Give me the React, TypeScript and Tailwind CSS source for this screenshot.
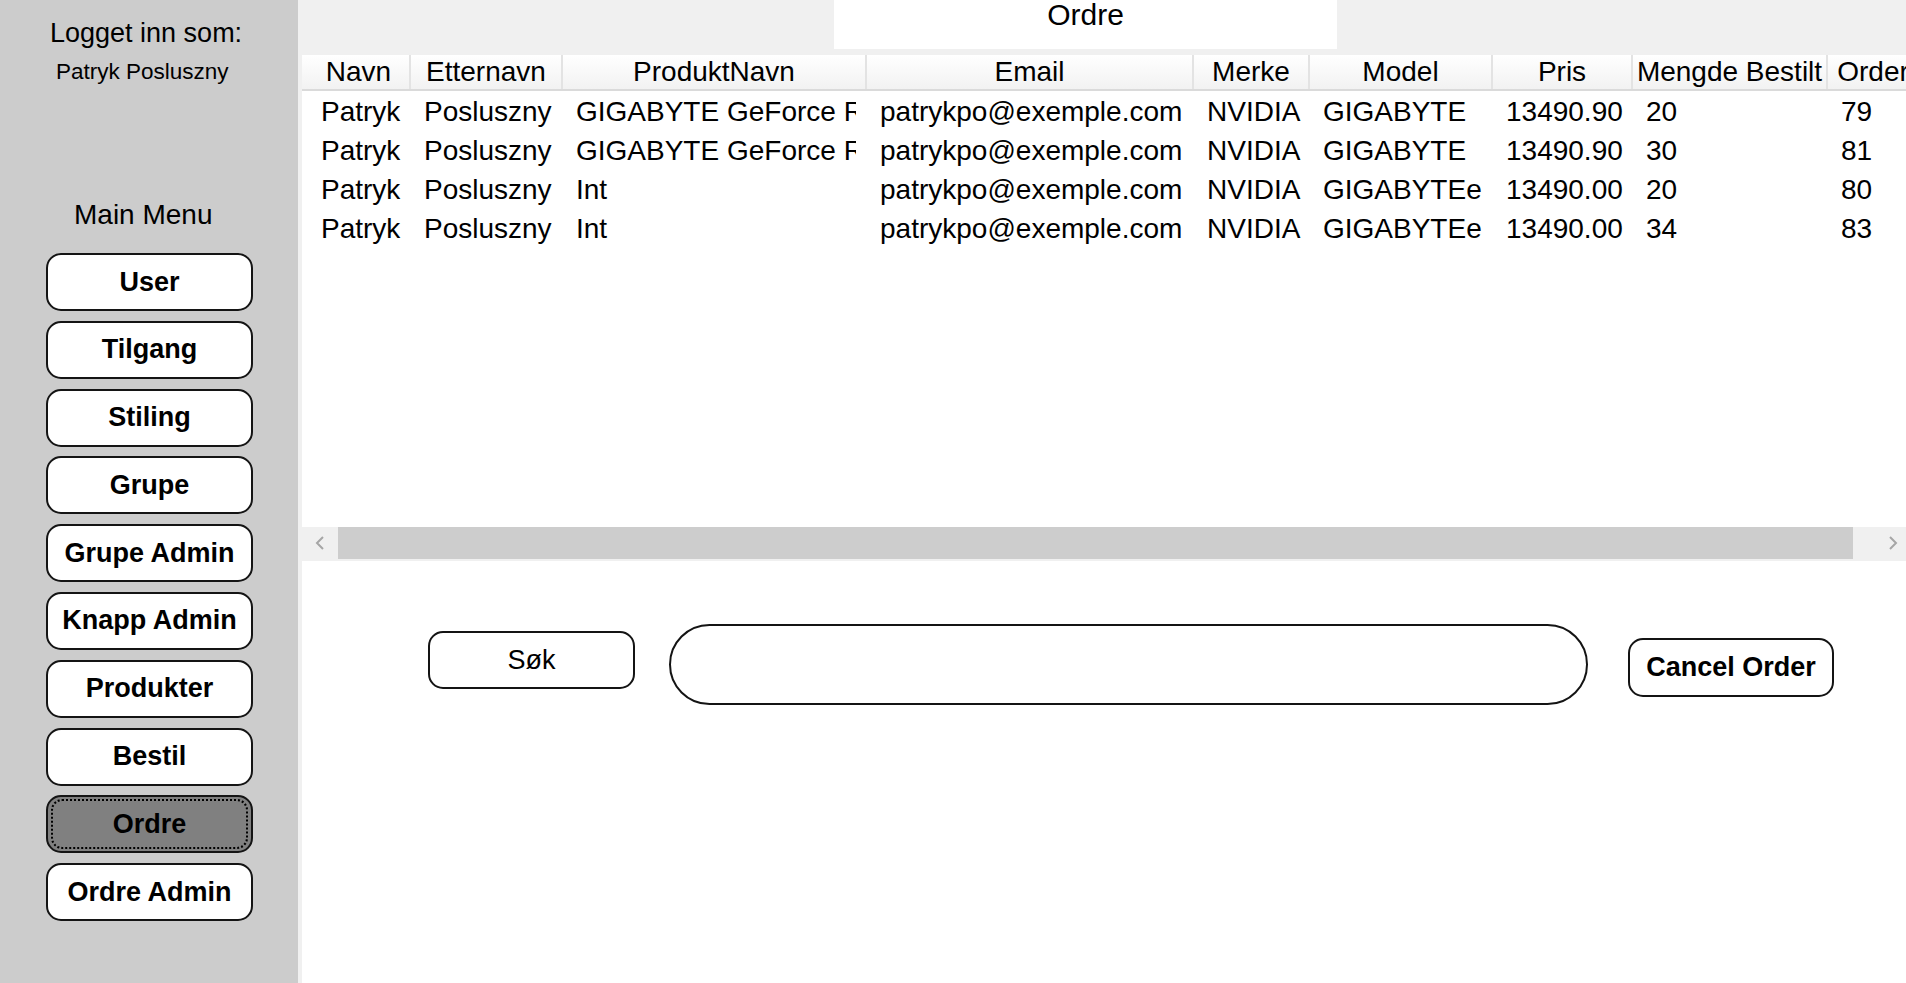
import React from 'react';

const MENU = ['User', 'Tilgang', 'Stiling', 'Grupe', 'Grupe Admin', 'Knapp Admin', 'Produkter', 'Bestil', 'Ordre', 'Ordre Admin'];

// column widths taken from the header separators; pad = right clip inset of the cell text
const COLUMNS: Array<{ label: string; width: string; pad: string }> = [
  { label: 'Navn', width: 'w-[103px]', pad: 'pr-[2px]' },
  { label: 'Etternavn', width: 'w-[152px]', pad: 'pr-[2px]' },
  { label: 'ProduktNavn', width: 'w-[304px]', pad: 'pr-[11px]' },
  { label: 'Email', width: 'w-[327px]', pad: 'pr-[2px]' },
  { label: 'Merke', width: 'w-[116px]', pad: 'pr-[2px]' },
  { label: 'Model', width: 'w-[183px]', pad: 'pr-[2px]' },
  { label: 'Pris', width: 'w-[140px]', pad: 'pr-[2px]' },
  { label: 'Mengde Bestilt', width: 'w-[195px]', pad: 'pr-[2px]' },
  { label: 'OrderID', width: 'w-[120px]', pad: 'pr-[2px]' },
];

const ROWS: string[][] = [
  ['Patryk', 'Posluszny', 'GIGABYTE GeForce RTX 4070', 'patrykpo@exemple.com', 'NVIDIA', 'GIGABYTE', '13490.90', '20', '79'],
  ['Patryk', 'Posluszny', 'GIGABYTE GeForce RTX 4070', 'patrykpo@exemple.com', 'NVIDIA', 'GIGABYTE', '13490.90', '30', '81'],
  ['Patryk', 'Posluszny', 'Int', 'patrykpo@exemple.com', 'NVIDIA', 'GIGABYTEe', '13490.00', '20', '80'],
  ['Patryk', 'Posluszny', 'Int', 'patrykpo@exemple.com', 'NVIDIA', 'GIGABYTEe', '13490.00', '34', '83'],
];

function Chevron({ dir }: { dir: 'left' | 'right' }) {
  return (
    <svg width="10" height="16" viewBox="0 0 10 16" fill="none">
      <polyline
        points={dir === 'left' ? '8,2 2,8 8,14' : '2,2 8,8 2,14'}
        stroke="#a6a6a6"
        strokeWidth="2"
      />
    </svg>
  );
}

function Sidebar() {
  return (
    <aside className="w-[298px] shrink-0 bg-[#cccccc] flex flex-col text-black">
      <p className="mt-[17px] pl-[50px] text-[27px] leading-[32px]">Logget inn som:</p>
      <p className="mt-[10px] pl-[56px] text-[22.5px] leading-[25px]">Patryk Posluszny</p>
      <p className="mt-[115px] pl-[74px] text-[28px] leading-[32px]">Main Menu</p>

      <nav className="mt-[22px] ml-[46px] flex flex-col gap-[9.8px]">
        {MENU.map((label) => {
          const active = label === 'Ordre';
          return (
            <button
              key={label}
              className={`relative w-[207px] h-[58px] rounded-[15px] border-2 border-[#141414] text-[27px] font-bold leading-none ${
                active ? 'bg-[#808080]' : 'bg-white'
              }`}
            >
              {active && (
                <span className="absolute inset-x-[3px] inset-y-[2px] rounded-[11px] border-2 border-dotted border-black" />
              )}
              <span className="relative">{label}</span>
            </button>
          );
        })}
      </nav>
    </aside>
  );
}

function OrderGrid() {
  return (
    <div className="h-[504px] bg-white flex flex-col overflow-hidden">
      <div className="flex h-[36px] pl-[6px] border-b-2 border-[#dadada] bg-gradient-to-b from-white to-[#f2f2f2]">
        {COLUMNS.map((col) => (
          <div
            key={col.label}
            className={`${col.width} shrink-0 border-r-2 border-[#e3e3e3] text-center text-[28px] leading-[34px] whitespace-nowrap overflow-hidden`}
          >
            {col.label}
          </div>
        ))}
      </div>

      <div className="flex-1 pl-[6px] pt-[1px]">
        {ROWS.map((row, i) => (
          <div key={i} className="flex h-[39px]">
            {row.map((cell, j) => (
              <div key={j} className={`${COLUMNS[j].width} ${COLUMNS[j].pad} shrink-0 pl-[13px]`}>
                <div className="overflow-hidden whitespace-nowrap text-[28px] leading-[39px]">{cell}</div>
              </div>
            ))}
          </div>
        ))}
      </div>

      <div className="h-[32px] flex">
        <div className="w-[36px] bg-[#f0f0f0] flex items-center justify-center">
          <Chevron dir="left" />
        </div>
        <div className="w-[1515px] bg-[#cdcdcd]" />
        <div className="flex-1 bg-[#f0f0f0] flex items-center justify-end pr-[8px]">
          <Chevron dir="right" />
        </div>
      </div>
    </div>
  );
}

export default function App() {
  return (
    <div className="w-[1906px] h-[983px] flex overflow-hidden bg-white text-black font-['Liberation_Sans',Arial,sans-serif]">
      <Sidebar />

      <main className="flex-1 flex flex-col pl-[4px] bg-[#f0f0f0] min-w-0">
        <div className="h-[55px] shrink-0">
          <div className="ml-[532px] w-[503px] h-[49px] bg-white text-center text-[30px] leading-[29px]">Ordre</div>
        </div>

        <OrderGrid />

        <div className="mt-[2px] flex-1 bg-white flex items-start pl-[126px]">
          <button className="mt-[70px] w-[207px] h-[58px] rounded-[15px] border-2 border-[#141414] bg-white text-[27px] leading-none">
            Søk
          </button>
          <input
            className="ml-[34px] mt-[63px] w-[919px] h-[81px] rounded-full border-2 border-[#141414] bg-white px-8 text-[27px] outline-none"
            defaultValue=""
          />
          <button className="ml-[40px] mt-[77px] w-[206px] h-[59px] rounded-[15px] border-2 border-[#141414] bg-white text-[27px] font-bold leading-none">
            Cancel Order
          </button>
        </div>
      </main>
    </div>
  );
}
